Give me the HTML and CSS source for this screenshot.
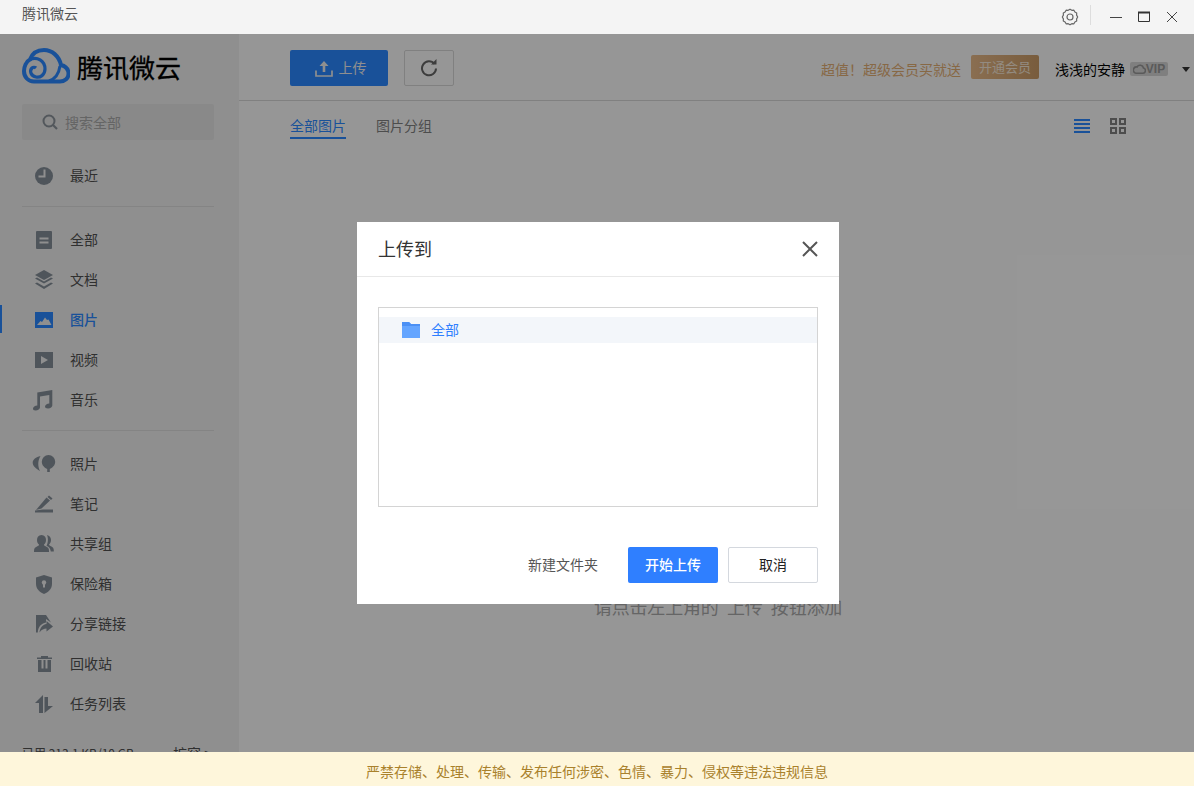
FILE: index.html
```html
<!DOCTYPE html>
<html lang="zh-CN">
<head>
<meta charset="utf-8">
<title>腾讯微云</title>
<link rel="stylesheet" href="styles.css">
</head>
<body>
<div class="app">
  <div class="titlebar">
    <span class="app-name">腾讯微云</span>
    <div class="win-tools">
      <svg class="gear" width="18" height="18" viewBox="0 0 18 18"><path d="M9 1.200l1.800 1.100 2.100-.1 1 1.800 1.800 1-.1 2.100L16.700 9l-1.100 1.900.1 2.100-1.800 1-1 1.800-2.100-.1L9 16.800l-1.800-1.100-2.100.1-1-1.800-1.800-1 .1-2.100L1.300 9l1.100-1.900-.1-2.100 1.800-1 1-1.800 2.100.1z" fill="none" stroke="#666" stroke-width="1.200" stroke-linejoin="round"/><circle cx="9" cy="9" r="3" fill="none" stroke="#666" stroke-width="1.200"/></svg>
      <span class="win-sep"></span>
      <svg width="12" height="12" viewBox="0 0 12 12"><path d="M0 6.500h12" stroke="#444" stroke-width="1"/></svg>
      <svg width="12" height="12" viewBox="0 0 12 12"><path d="M.5 1.500h11v9H.5z" fill="none" stroke="#333" stroke-width="1"/><path d="M0 1.500h12" stroke="#333" stroke-width="2"/></svg>
      <svg width="12" height="12" viewBox="0 0 12 12"><path d="M1 1l10 10M11 1L1 11" stroke="#444" stroke-width="1"/></svg>
    </div>
  </div>

  <div class="shell">
    <aside class="sidebar">
      <div class="logo">
        <svg width="48" height="36" viewBox="0 0 48 36"><path d="M12 33.500H38C43 33.500 46.500 30 46.500 26C46.500 21 43 18 39 17C37 8 30 2 22 2C15 2 10 6 8 11.500C4 13.500 2 19 2 23C2 29 6 33.500 12 33.500" fill="none" stroke="#2b88ff" stroke-width="4"/><path d="M8 11.500C15 8 23 13 23 21C23 27 18 30 14 29C9 28 7 23 10 20C11 19 13 19 14 20" fill="none" stroke="#2b88ff" stroke-width="3.200"/><path d="M27 33C33 31 37 25 38 18" fill="none" stroke="#2b88ff" stroke-width="3"/></svg>
        <span class="logo-text">腾讯微云</span>
      </div>
      <div class="search">
        <svg width="16" height="16" viewBox="0 0 16 16"><circle cx="7" cy="7" r="5.500" fill="none" stroke="#8a9299" stroke-width="2"/><path d="M11 11l4 4" stroke="#8a9299" stroke-width="2.200"/></svg>
        <span>搜索全部</span>
      </div>

      <nav class="nav">
        <a class="nav-item"><svg class="ico" viewBox="0 0 20 20"><circle cx="10" cy="10" r="9" fill="#848e98"/><path d="M10.500 3.500v7H4.500" fill="none" stroke="#eee" stroke-width="2"/></svg><span>最近</span></a>
      </nav>
      <div class="divider"></div>
      <nav class="nav">
        <a class="nav-item"><svg class="ico" viewBox="0 0 20 20"><rect x="2" y="1" width="16" height="18" rx="1" fill="#848e98"/><path d="M5.500 7.500h9v2h-9zM5.500 11.500h9v2h-9z" fill="#eee"/></svg><span>全部</span></a>
        <a class="nav-item"><svg class="ico" viewBox="0 0 20 20"><path d="M10 0l9 5-9 5-9-5z" fill="#848e98"/><path d="M1 8.500l2-1 7 4 7-4 2 1-9 5z" fill="#848e98"/><path d="M1 13.500l2-1 7 4 7-4 2 1-9 5.500z" fill="#848e98"/></svg><span>文档</span></a>
        <a class="nav-item active"><svg class="ico" viewBox="0 0 20 20"><rect x="1" y="2" width="18" height="16" fill="#2b88ff"/><path d="M3 15l3.500-4 1.500 1 3-4.500 2 2.500 1.500-.5 3 5.500z" fill="#eee"/></svg><span>图片</span></a>
        <a class="nav-item"><svg class="ico" viewBox="0 0 20 20"><rect x="1" y="2" width="18" height="16" fill="#848e98"/><path d="M7 6l7 4-7 4z" fill="#eee"/></svg><span>视频</span></a>
        <a class="nav-item"><svg class="ico" viewBox="0 0 20 20"><path d="M3.300 2.500L18.300 0V15.500C18.300 17 16.500 18.500 14 18.500C12 18.500 11 17.500 11 16.500C11 15 13 13.500 15.300 13.500V5L6 6.500V17.500C6 19 4 20.500 1.500 20.500C-.5 20.500-1 19.500-1 18.500C-1 17 1 15.500 3.300 15.500z" fill="#848e98"/></svg><span>音乐</span></a>
      </nav>
      <div class="divider"></div>
      <nav class="nav">
        <a class="nav-item"><svg class="ico" viewBox="0 0 20 20"><path d="M14.500 1a6.700 6.700 0 0 1 6.700 6.700c0 3.700-3 6.200-5.400 7.300v3h-2.600v-3C10.800 13.900 7.800 11.400 7.800 7.700A6.700 6.700 0 0 1 14.500 1z" fill="#848e98"/><path d="M6.500 2C2 3-1.300 5.500-1.300 8.800c0 3 2.800 5.700 7.300 8.200C4 13.500 3.300 6.800 6.500 2z" fill="#848e98"/></svg><span>照片</span></a>
        <a class="nav-item"><svg class="ico" viewBox="0 0 20 20"><path d="M15 1.500l3.500 3-1.500 1.500-3.500-3z" fill="#848e98"/><path d="M12.500 3.500l3.500 3-8.500 8-5.500 1.500z" fill="#848e98"/><path d="M1 16.500l8-1h10v3H1z" fill="#848e98"/></svg><span>笔记</span></a>
        <a class="nav-item"><svg class="ico" viewBox="0 0 20 20"><path d="M7.500 1c3 0 4.500 2.200 4.500 5 0 2-.8 3.500-2 4.500 0 1 .8 1.500 2 2 2 .8 3 2 3 4.500v1H0v-1c0-2.500 1-3.700 3-4.500 1.200-.5 2-1 2-2-1.200-1-2-2.500-2-4.500C3 3.200 4.500 1 7.500 1z" fill="#848e98"/><path d="M13 1c2.500.5 4 2.500 4 5 0 2-1 3.500-2 4.500.3 1 1 1.300 2 1.800 1.800.8 2.800 2 2.800 4.200v1h-3c-.3-2.500-1.500-4.500-4.300-5.700 1.500-2.500 2-7.500.5-10.800z" fill="#848e98"/></svg><span>共享组</span></a>
        <a class="nav-item"><svg class="ico" viewBox="0 0 20 20"><path d="M10 1l8 2.500V10c0 5-4 8.500-8 10-4-1.500-8-5-8-10V3.500z" fill="#848e98"/><circle cx="10" cy="8.500" r="2.200" fill="#eee"/><path d="M9 8.500h2v5H9z" fill="#eee"/></svg><span>保险箱</span></a>
        <a class="nav-item"><svg class="ico" viewBox="0 0 20 20"><path d="M2 1h10l5 7.500-5-3.500v3.500C7 9.500 4 13 3.800 18.500H2z" fill="#848e98"/><path d="M12.500 7l6.500 5.500-6.500 5v-3c-2.500 0-5 1-7 4 .5-4.500 3-8 7-8.500z" fill="#848e98"/></svg><span>分享链接</span></a>
        <a class="nav-item"><svg class="ico" viewBox="0 0 20 20"><path d="M7 2h7v1.500h4V5H3V3.500h4z" fill="#848e98"/><path d="M4 6h13v12H4z" fill="#848e98"/><path d="M7.500 6h2v8.500h-2zM11.500 6h2v8.500h-2z" fill="#eee"/></svg><span>回收站</span></a>
        <a class="nav-item"><svg class="ico" viewBox="0 0 20 20"><path d="M9 1V19H5V9H1z" fill="#848e98"/><path d="M10.500 3h3.500v9H19L10.500 19z" fill="#848e98"/></svg><span>任务列表</span></a>
      </nav>
      <div class="usage"><span>已用 213.1 KB/10 GB</span><span class="expand">扩容 &gt;</span></div>
    </aside>

    <main class="main">
      <header class="toolbar">
        <button class="btn-upload">
          <svg width="18" height="17" viewBox="0 0 18 17"><path d="M9 1l4.500 5H10.300v6H7.700V6H4.500z" fill="#eee"/><path d="M1 10.500V16h16v-5.500" fill="none" stroke="#eee" stroke-width="1.700"/></svg>
          <span>上传</span>
        </button>
        <button class="btn-refresh">
          <svg width="18" height="18" viewBox="0 0 18 18"><path d="M14.500 5A7 7 0 1 0 16 9.500" fill="none" stroke="#666" stroke-width="2"/><path d="M11 5.500h5.500V0z" fill="#666"/></svg>
        </button>
        <div class="account">
          <span class="promo">超值！超级会员买就送</span>
          <span class="join">开通会员</span>
          <span class="user">浅浅的安静</span>
          <span class="vip"><svg width="13" height="10" viewBox="0 0 13 10"><path d="M3 9.200h7a2.600 2.600 0 0 0 .5-5.100A3.500 3.500 0 0 0 4 3a3 3 0 0 0-1 6.200z" fill="none" stroke="#969696" stroke-width="1.600"/></svg>VIP</span>
          <span class="caret"></span>
        </div>
      </header>
      <div class="tabbar">
        <div class="tabs">
          <span class="tab on">全部图片</span>
          <span class="tab">图片分组</span>
        </div>
        <div class="views">
          <svg width="16" height="14" viewBox="0 0 16 14"><path d="M0 0h16v2H0zM0 4h16v2H0zM0 8h16v2H0zM0 12h16v2H0z" fill="#2b88ff"/></svg>
          <svg width="16" height="16" viewBox="0 0 16 16"><path d="M1 1h5v5H1zM10 1h5v5h-5zM1 10h5v5H1zM10 10h5v5h-5z" fill="none" stroke="#808080" stroke-width="2"/></svg>
        </div>
      </div>
      <div class="empty">请点击左上角的"上传"按钮添加</div>
    </main>
  </div>

  <div class="overlay"></div>

  <section class="dialog">
    <div class="dialog-head">
      <h2>上传到</h2>
      <svg width="18" height="18" viewBox="0 0 18 18"><path d="M2 2l14 14M16 2L2 16" stroke="#555" stroke-width="2"/></svg>
    </div>
    <div class="dialog-body">
      <div class="tree">
        <div class="tree-row">
          <svg width="18" height="16" viewBox="0 0 18 16"><path d="M0 1a1 1 0 0 1 1-1h6l2 2h9v14H0z" fill="#64a5ff"/><path d="M0 0h7l2 2h9v2H0z" fill="#4b90f5"/></svg>
          <span>全部</span>
        </div>
      </div>
    </div>
    <div class="dialog-foot">
      <span class="new-folder">新建文件夹</span>
      <button class="btn-primary"><span>开始上传</span></button>
      <button class="btn-cancel"><span>取消</span></button>
    </div>
  </section>

  <div class="notice">严禁存储、处理、传输、发布任何涉密、色情、暴力、侵权等违法违规信息</div>
</div>
</body>
</html>
```
FILE: styles.css
```css
* { box-sizing: border-box; }
html, body { margin: 0; padding: 0; height: 100%; overflow: hidden; }
body { font-family: "Noto Sans CJK SC", "Liberation Sans", sans-serif; font-size: 14px; color: #333; }
button { font-family: inherit; font-size: 14px; cursor: pointer; }
button span { display: block; padding-bottom: 2px; }

.app { position: relative; width: 1194px; height: 786px; overflow: hidden; display: flex; flex-direction: column; background: #fbfbfb; }

.titlebar { height: 34px; flex: none; display: flex; align-items: center; justify-content: space-between; background: #f4f4f4; padding: 0 16px 5px 22px; }
.app-name { color: #555; line-height: 20px; padding-bottom: 3px; }
.win-tools { display: flex; align-items: center; padding-top: 5px; }
.gear { margin-right: 11px; margin-left: -1px; }
.win-sep { width: 1px; height: 20px; background: #ddd; margin: -4px 19px 0 0; }
.win-tools svg:nth-of-type(2), .win-tools svg:nth-of-type(3) { margin-right: 16px; }

.shell { flex: 1; display: flex; min-height: 0; }

.sidebar { width: 239px; flex: none; background: #eee; display: flex; flex-direction: column; overflow: hidden; }
.logo { height: 70px; flex: none; display: flex; align-items: center; padding: 0 0 0 22px; gap: 7px; }
.logo svg { margin-top: -6px; }
.logo-text { font-size: 26px; line-height: 36px; color: #000; margin-top: -5px; -webkit-text-stroke: .3px #000; }
.search { margin: 0 25px 0 22px; height: 36px; flex: none; background: #e4e4e4; border-radius: 2px; display: flex; align-items: center; padding-left: 20px; gap: 7px; color: #a8a8a8; }

.nav { display: flex; flex-direction: column; }
.sidebar > .search + .nav { margin-top: 16px; }
.nav-item { position: relative; height: 40px; display: flex; align-items: center; color: #505050; padding-left: 34px; }
.nav-item span { padding-bottom: 2px; }
.nav-item .ico { width: 20px; height: 20px; margin-right: 16px; flex: none; overflow: visible; }
.nav-item.active { color: #2b88ff; font-weight: 500; }
.nav-item.active::before { content: ""; position: absolute; left: 0; top: 5px; width: 2px; height: 28px; background: #2b88ff; }
.divider { height: 1px; flex: none; background: #dcdcdc; margin: 10px 25px 13px 22px; }

.usage { margin: 21px 25px 0 22px; display: flex; justify-content: space-between; font-size: 12px; line-height: 16px; color: #505050; }
.expand { font-size: 14px; padding-right: 2px; }

.main { flex: 1; min-width: 0; display: flex; flex-direction: column; }
.toolbar { height: 67px; flex: none; display: flex; align-items: center; padding: 2px 4px 0 51px; border-bottom: 1px solid #d6d6d6; }
.btn-upload { width: 98px; height: 36px; border: 0; border-radius: 2px; background: #2b88ff; color: #eee; display: flex; align-items: center; justify-content: center; gap: 6px; padding: 0 0 0 3px; }
.btn-refresh { width: 50px; height: 36px; margin-left: 16px; border: 1px solid #d6d6d6; border-radius: 2px; background: transparent; display: flex; align-items: center; justify-content: center; padding: 0; }
.account { margin-left: auto; display: flex; align-items: center; padding-top: 2px; }
.promo { color: #e2ad73; }
.join { width: 68px; height: 24px; margin: -4px 16px 0 10px; border-radius: 2px; background: linear-gradient(90deg, #e6b888, #c99a66); color: #f5e8d8; font-size: 13px; line-height: 23px; text-align: center; }
.user { color: #000; }
.vip { width: 38px; height: 14px; margin-left: 5px; border-radius: 2px; background: #d4d4d4; color: #969696; font-size: 12px; font-weight: 700; line-height: 14px; display: flex; align-items: center; justify-content: center; font-family: "Liberation Sans", sans-serif; }
.caret { margin: 1px 0 0 14px; border: 4.500px solid transparent; border-top: 5px solid #333; border-bottom: 0; }

.tabbar { height: 50px; flex: none; display: flex; justify-content: space-between; padding: 0 68px 0 51px; }
.tabs { display: flex; gap: 30px; padding-top: 14px; align-items: flex-start; }
.tab { height: 24px; line-height: 20px; color: #808080; }
.tab.on { color: #2b88ff; border-bottom: 2px solid #2b88ff; }
.views { display: flex; align-items: center; gap: 20px; height: 50px; }

.empty { margin-top: 442px; text-align: center; font-size: 18px; line-height: 26px; color: #a8a8a8; padding-left: 3px; letter-spacing: -.2px; }

.overlay { position: absolute; left: 0; right: 0; top: 34px; bottom: 0; background: rgba(0, 0, 0, .4); }

.dialog { position: absolute; left: 357px; top: 222px; width: 482px; height: 382px; background: #fff; display: flex; flex-direction: column; }
.dialog-head { height: 55px; flex: none; display: flex; align-items: center; justify-content: space-between; padding: 0 20px 0 21px; border-bottom: 1px solid #e8e8e8; }
.dialog-head h2 { margin: 0 0 2px; font-size: 18px; font-weight: 400; color: #333; }
.dialog-body { padding: 30px 21px 0; }
.tree { height: 200px; border: 1px solid #d4d4d4; padding-top: 9px; }
.tree-row { height: 26px; background: #f3f6fa; display: flex; align-items: center; gap: 11px; padding-left: 23px; color: #2f7fff; }
.tree-row span { padding-bottom: 2px; }
.dialog-foot { margin-top: 40px; display: flex; align-items: center; justify-content: flex-end; padding-right: 21px; }
.new-folder { color: #555; margin-right: 30px; padding-bottom: 2px; }
.btn-primary { width: 90px; height: 36px; border: 0; border-radius: 2px; background: #2f7fff; color: #fff; font-weight: 500; padding: 0; }
.btn-cancel { width: 90px; height: 36px; margin-left: 10px; border: 1px solid #d4d8de; border-radius: 2px; background: #fff; color: #222; padding: 0; }

.notice { position: absolute; left: 0; right: 0; bottom: 0; height: 34px; background: #fef6db; color: #a9812c; font-size: 14px; line-height: 39px; text-align: center; }
```
